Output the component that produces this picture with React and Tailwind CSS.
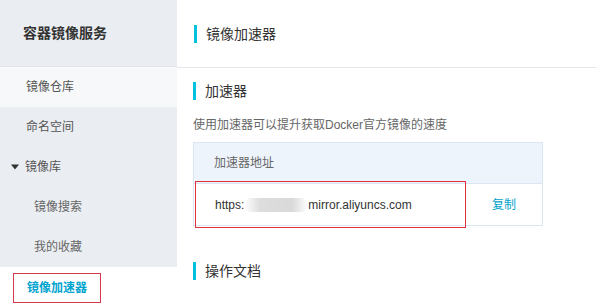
import React from 'react';

const font = { fontFamily: '"Liberation Sans", "Noto Sans CJK SC", sans-serif' };

const SectionTitle = ({ children, className = '' }) => (
    <div className={`flex items-center h-[18px] ${className}`}>
        <span className="w-[3px] h-[18px] bg-[#00c1de]" />
        <span className="ml-[9px] text-[14px] leading-[18px] text-[#333]">{children}</span>
    </div>
);

const navItems = [
    { label: '镜像仓库', light: true },
    { label: '命名空间' },
];

const App = () => (
    <div className="flex w-[596px] h-[308px] bg-white overflow-hidden" style={font}>
        {/* sidebar */}
        <div className="w-[177px] flex flex-col shrink-0">
            <div className="h-[67px] bg-[#eaedf1] flex items-center pl-[23px] border-b border-[#e0e4e9]">
                <span className="text-[14px] font-bold text-[#333]">容器镜像服务</span>
            </div>
            {navItems.map((item) => (
                <div
                    key={item.label}
                    className={`h-[40px] flex items-center pl-[26px] text-[12px] text-[#555] ${item.light ? 'bg-[#f6f8fa]' : 'bg-[#eaedf1]'}`}
                >
                    {item.label}
                </div>
            ))}
            <div className="h-[40px] flex items-center pl-[11px] text-[12px] text-[#555] bg-[#eaedf1]">
                <svg width="8" height="6" viewBox="0 0 8 6" className="mr-[6px]">
                    <path d="M0 0.5h8L4 5.5z" fill="#333" />
                </svg>
                镜像库
            </div>
            <div className="h-[40px] flex items-center pl-[34px] text-[12px] text-[#666] bg-[#eaedf1]">镜像搜索</div>
            <div className="h-[40px] flex items-center pl-[34px] text-[12px] text-[#666] bg-[#eaedf1]">我的收藏</div>
            <div className="h-[41px] flex items-center pl-[13px] bg-white">
                <span className="inline-flex items-center h-[30px] px-[13px] border border-[#d23b47] text-[12px] font-bold text-[#00a4cf]">
                    镜像加速器
                </span>
            </div>
        </div>

        {/* main */}
        <div className="flex-1 flex flex-col">
            <div className="h-[68px] border-b border-[#e3e6ea] flex items-center pl-[17px]">
                <SectionTitle>镜像加速器</SectionTitle>
            </div>
            <div className="pl-[16px] pt-[14px]">
                <SectionTitle>加速器</SectionTitle>
                <p className="mt-[15px] text-[12px] leading-[20px] text-[#666]">使用加速器可以提升获取Docker官方镜像的速度</p>
                <div className="mt-[7px] w-[350px] border border-[#dbe6f2]">
                    <div className="h-[41px] bg-[#eef4fc] border-b border-[#dbe6f2] flex items-center pl-[20px] text-[12px] text-[#666]">
                        加速器地址
                    </div>
                    <div className="h-[41px] flex items-center text-[12px]">
                        <div className="ml-[1px] w-[271px] h-[47px] shrink-0 ring-1 ring-inset ring-[#e0303e] pl-[20px] flex items-center text-[#333]">
                            https:
                            <span className="inline-block w-[64px] h-[14px] rounded-full bg-[linear-gradient(90deg,#ffffff,#dddddd_25%,#d9d9d9_75%,#ffffff)]" />
                            mirror.aliyuncs.com
                        </div>
                        <div className="flex-1 text-center text-[#00a2ca]">复制</div>
                    </div>
                </div>
                <SectionTitle className="mt-[36px]">操作文档</SectionTitle>
            </div>
        </div>
    </div>
);

export default App;
